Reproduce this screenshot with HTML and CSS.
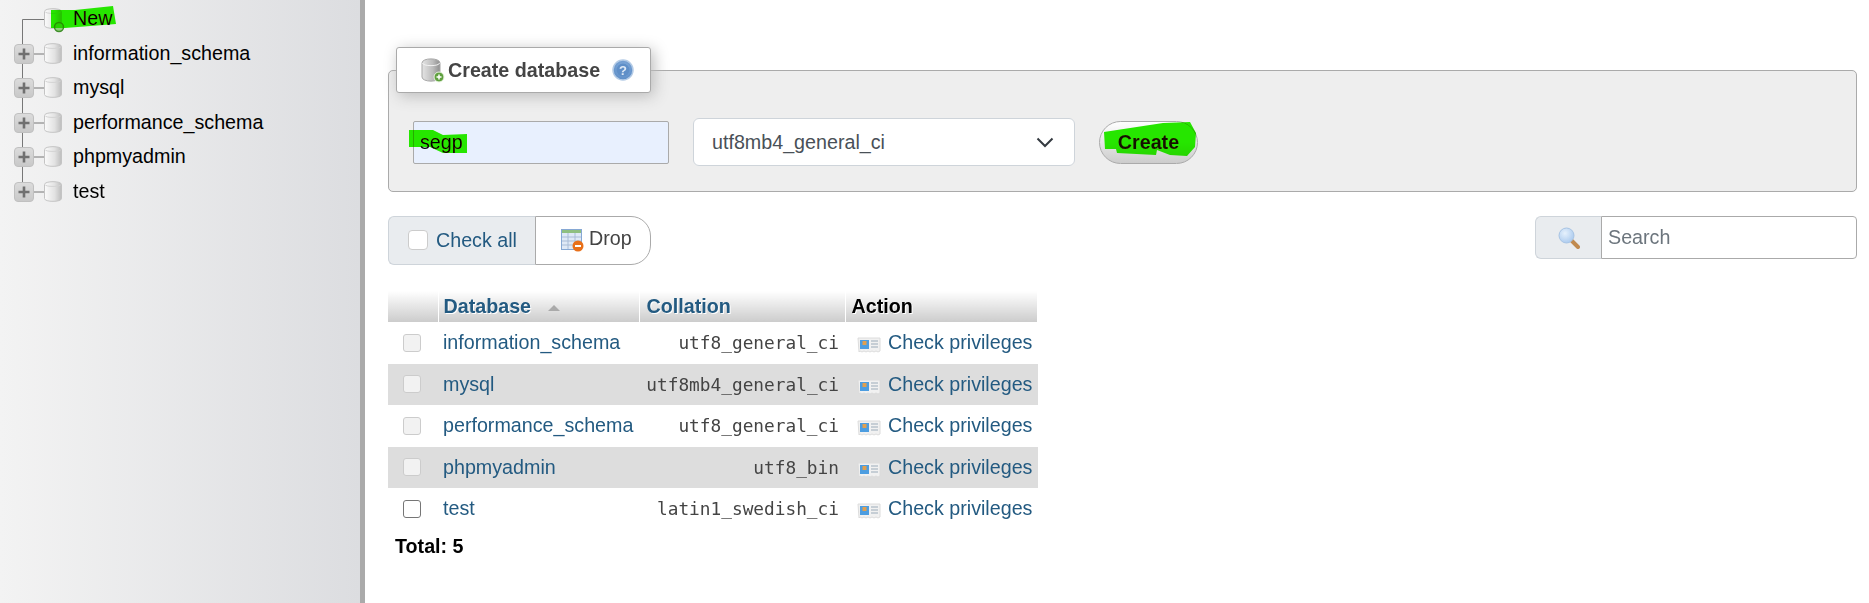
FILE: index.html
```html
<!DOCTYPE html>
<html lang="en">
<head>
    <meta charset="UTF-8">
    <meta name="viewport" content="width=device-width, initial-scale=1.0">
    <title>Databases - phpMyAdmin</title>
    <link rel="stylesheet" href="styles.css">
</head>
<body>
    <!-- Icon sprites -->
    <svg class="sprites" width="0" height="0">
        <defs>
            <linearGradient id="dbGrad" x1="0" y1="0" x2="1" y2="0">
                <stop offset="0" stop-color="#fbfbfb"/>
                <stop offset="0.6" stop-color="#e2e2e2"/>
                <stop offset="1" stop-color="#bdbdbd"/>
            </linearGradient>
            <linearGradient id="dbDark" x1="0" y1="0" x2="1" y2="0">
                <stop offset="0" stop-color="#e4e4e4"/>
                <stop offset="0.6" stop-color="#bcbcbc"/>
                <stop offset="1" stop-color="#8e8e8e"/>
            </linearGradient>
            <linearGradient id="boxGrad" x1="0" y1="0" x2="0" y2="1">
                <stop offset="0" stop-color="#dcdcdc"/>
                <stop offset="1" stop-color="#c8c8c8"/>
            </linearGradient>
            <radialGradient id="helpGrad" cx="0.5" cy="0.4" r="0.6">
                <stop offset="0" stop-color="#8fb4e0"/>
                <stop offset="1" stop-color="#5b8cc6"/>
            </radialGradient>
            <radialGradient id="lensGrad" cx="0.4" cy="0.35" r="0.7">
                <stop offset="0" stop-color="#e6f1fc"/>
                <stop offset="1" stop-color="#a9c9ee"/>
            </radialGradient>
            <symbol id="db" viewBox="0 0 18 21">
                <path d="M0.500 3.500c0-3.800 17-3.800 17 0v14c0 3.800-17 3.800-17 0z" fill="url(#dbGrad)" stroke="#c4c4c4"/>
                <path d="M1 3.500c0 2.600 16 2.600 16 0" fill="none" stroke="#d4d4d4"/>
            </symbol>
            <symbol id="expander" viewBox="0 0 20 20">
                <rect x="0.500" y="0.500" width="19" height="19" rx="3.500" fill="url(#boxGrad)" stroke="#c0c0c0"/>
                <path d="M10 4.500v11M4.500 10h11" stroke="#707070" stroke-width="2.600"/>
            </symbol>
            <symbol id="card" viewBox="0 0 24 17">
                <path d="M1 2h22v13l-2 1-2-1-2 1-2-1-2 1-2-1-2 1-2-1-2 1-2-1-1 1z" fill="#f1f1f1" stroke="#dcdcdc"/>
                <rect x="3" y="4" width="9" height="9" fill="#4d9de0"/>
                <rect x="5.500" y="5" width="4" height="4" fill="#e0a050"/>
                <path d="M14 5h7M14 8h7M14 11h7" stroke="#b8c2cc" stroke-width="1.300"/>
            </symbol>
        </defs>
    </svg>

    <aside class="sidebar">
        <ul class="tree">
            <li class="tree-row">
                <svg class="tree-lead" width="64" height="35" viewBox="0 0 64 35">
                    <path d="M22.500 18.500V35M22.500 18.500H45" stroke="#777" fill="none"/>
                    <use href="#db" x="44" y="7" width="18" height="21"/>
                    <circle cx="59" cy="26" r="4.500" fill="#8fd07a" stroke="#3f8f2a" stroke-width="1.500"/>
                </svg>
                <a href="#">New</a>
            </li>
            <li class="tree-row">
                <svg class="tree-lead" width="64" height="35" viewBox="0 0 64 35">
                    <path d="M22.500 0V35M34 18H45" stroke="#777" fill="none"/>
                    <use href="#expander" x="14" y="8" width="20" height="20"/>
                    <use href="#db" x="44" y="7" width="18" height="21"/>
                </svg>
                <a href="#">information_schema</a>
            </li>
            <li class="tree-row">
                <svg class="tree-lead" width="64" height="35" viewBox="0 0 64 35">
                    <path d="M22.500 0V35M34 18H45" stroke="#777" fill="none"/>
                    <use href="#expander" x="14" y="8" width="20" height="20"/>
                    <use href="#db" x="44" y="7" width="18" height="21"/>
                </svg>
                <a href="#">mysql</a>
            </li>
            <li class="tree-row">
                <svg class="tree-lead" width="64" height="35" viewBox="0 0 64 35">
                    <path d="M22.500 0V35M34 18H45" stroke="#777" fill="none"/>
                    <use href="#expander" x="14" y="8" width="20" height="20"/>
                    <use href="#db" x="44" y="7" width="18" height="21"/>
                </svg>
                <a href="#">performance_schema</a>
            </li>
            <li class="tree-row">
                <svg class="tree-lead" width="64" height="35" viewBox="0 0 64 35">
                    <path d="M22.500 0V35M34 18H45" stroke="#777" fill="none"/>
                    <use href="#expander" x="14" y="8" width="20" height="20"/>
                    <use href="#db" x="44" y="7" width="18" height="21"/>
                </svg>
                <a href="#">phpmyadmin</a>
            </li>
            <li class="tree-row">
                <svg class="tree-lead" width="64" height="35" viewBox="0 0 64 35">
                    <path d="M22.500 0V18M34 18H45" stroke="#777" fill="none"/>
                    <use href="#expander" x="14" y="8" width="20" height="20"/>
                    <use href="#db" x="44" y="7" width="18" height="21"/>
                </svg>
                <a href="#">test</a>
            </li>
        </ul>
    </aside>

    <main class="content">
        <fieldset class="create-box">
            <legend class="create-title">
                <svg width="24" height="26" viewBox="0 0 24 26">
                    <path d="M1 6c0-5.500 18-5.500 18 0v14c0 5.500-18 5.500-18 0z" fill="url(#dbDark)" stroke="#a8a8a8"/>
                    <path d="M1.500 6c0 3.500 17 3.500 17 0" fill="none" stroke="#f2f2f2"/>
                    <circle cx="18" cy="20" r="5" fill="#5fa03f" stroke="#eaf5e2"/>
                    <path d="M15.500 20h5M18 17.500v5" stroke="#fff" stroke-width="1.500"/>
                </svg>
                <span>Create database</span>
                <svg class="help-icon" width="22" height="22" viewBox="0 0 22 22">
                    <circle cx="11" cy="11" r="10" fill="url(#helpGrad)" stroke="#b4cbe6" stroke-width="1.500"/>
                    <circle cx="11" cy="11" r="6.500" fill="#5f8fc8"/>
                    <text x="11" y="15.500" text-anchor="middle" class="help-mark">?</text>
                </svg>
            </legend>
            <div class="create-form">
                <input class="db-name" type="text" value="segp">
                <div class="collation-select">
                    <span>utf8mb4_general_ci</span>
                    <svg width="18" height="11" viewBox="0 0 18 11">
                        <path d="M1.500 1.500L9 9l7.500-7.500" fill="none" stroke="#343a40" stroke-width="2"/>
                    </svg>
                </div>
                <button class="create-btn">Create</button>
            </div>
        </fieldset>

        <div class="toolbar">
            <div class="bulk-group">
                <label class="check-all"><input class="check" type="checkbox"> Check all</label>
                <a class="drop-btn" href="#">
                    <svg width="23" height="23" viewBox="0 0 23 23">
                        <rect x="0.500" y="0.500" width="20" height="20" fill="#dfe9f6" stroke="#86a8d4"/>
                        <rect x="1" y="1" width="19" height="3" fill="#8fbf80"/>
                        <path d="M1 8h19M1 12h19M1 16h19M7 4v16M14 4v16" stroke="#a9bcd6"/>
                        <circle cx="17" cy="17" r="5.500" fill="#e8701a"/>
                        <path d="M14 17h6" stroke="#fff" stroke-width="2"/>
                    </svg>
                    <span class="drop-label">Drop</span>
                </a>
            </div>
            <div class="search-group">
                <span class="search-addon">
                    <svg width="22" height="22" viewBox="0 0 22 22">
                        <path d="M13 13l7 7" stroke="#c08a50" stroke-width="4" stroke-linecap="round"/>
                        <circle cx="8.500" cy="8.500" r="7.500" fill="url(#lensGrad)" stroke="#a8c4e4"/>
                    </svg>
                </span>
                <input class="search-input" type="text" placeholder="Search">
            </div>
        </div>

        <table class="db-table">
            <thead>
                <tr>
                    <th class="col-check"></th>
                    <th class="col-name"><a href="#">Database</a><span class="sort-arrow"></span></th>
                    <th class="col-coll"><a href="#">Collation</a></th>
                    <th class="col-action">Action</th>
                </tr>
            </thead>
            <tbody>
                <tr>
                    <td><input class="check" type="checkbox" disabled></td>
                    <td><a href="#">information_schema</a></td>
                    <td class="coll">utf8_general_ci</td>
                    <td><a class="priv" href="#"><svg width="24" height="17"><use href="#card"/></svg>Check privileges</a></td>
                </tr>
                <tr>
                    <td><input class="check" type="checkbox" disabled></td>
                    <td><a href="#">mysql</a></td>
                    <td class="coll">utf8mb4_general_ci</td>
                    <td><a class="priv" href="#"><svg width="24" height="17"><use href="#card"/></svg>Check privileges</a></td>
                </tr>
                <tr>
                    <td><input class="check" type="checkbox" disabled></td>
                    <td><a href="#">performance_schema</a></td>
                    <td class="coll">utf8_general_ci</td>
                    <td><a class="priv" href="#"><svg width="24" height="17"><use href="#card"/></svg>Check privileges</a></td>
                </tr>
                <tr>
                    <td><input class="check" type="checkbox" disabled></td>
                    <td><a href="#">phpmyadmin</a></td>
                    <td class="coll">utf8_bin</td>
                    <td><a class="priv" href="#"><svg width="24" height="17"><use href="#card"/></svg>Check privileges</a></td>
                </tr>
                <tr>
                    <td><input class="check" type="checkbox"></td>
                    <td><a href="#">test</a></td>
                    <td class="coll">latin1_swedish_ci</td>
                    <td><a class="priv" href="#"><svg width="24" height="17"><use href="#card"/></svg>Check privileges</a></td>
                </tr>
            </tbody>
        </table>
        <p class="total">Total: 5</p>
    </main>

    <!-- Green marker strokes drawn over the screenshot -->
    <svg class="marker" viewBox="0 0 1869 603">
        <path d="M51 10L75 10 113 6 116 24 65 28 51 28z"/>
        <path d="M409 130L433 130 443 135 467 134 467 153 443 153 430 147 409 147z"/>
        <path d="M1104 132L1117 130 1163 123 1190 122 1196 133 1195 147 1187 156 1170 155 1157 150 1156 155 1117 153 1116 149 1105 149z"/>
    </svg>
</body>
</html>
```

FILE: styles.css
```css
* {
    box-sizing: border-box;
}

body {
    font-family: "Liberation Sans", Arial, sans-serif;
    font-size: 19.700px;
    color: #444;
    margin: 0;
    min-height: 100vh;
    display: flex;
    overflow: hidden;
}

a {
    color: #235a81;
    text-decoration: none;
}

.sprites {
    display: block;
    width: 0;
    height: 0;
}

/* Navigation */
.sidebar {
    flex: 0 0 365px;
    padding-top: 1.500px;
    background: linear-gradient(to right, #f3f3f3, #dcdde0);
    border-right: 5px solid #aaa;
}

.tree {
    list-style: none;
    margin: 0;
    padding: 0;
}

.tree-row {
    height: 34.500px;
    display: flex;
    align-items: center;
    gap: 9px;
}

.tree-row a {
    color: #000;
}

.tree-lead {
    flex: none;
    overflow: visible;
}

/* Main area */
.content {
    flex: 1;
    padding: 0 12px 0 23px;
}

.create-box {
    margin: 47px 0 0;
    padding: 0 24px 25px;
    background: #eee;
    border: 1px solid #aaa;
    border-radius: 5px;
    min-width: 0;
}

.create-title {
    margin-left: -17px;
    width: 255px;
    height: 46px;
    padding: 0 0 0 24px;
    display: flex;
    align-items: center;
    background: #fff;
    border: 1px solid #aaa;
    border-radius: 3px;
    box-shadow: 3px 3px 15px #bbb;
    font-weight: bold;
    color: #444;
}

.create-title span {
    margin-left: 3px;
}

.help-icon {
    margin-left: 12px;
}

.help-mark {
    font-size: 13px;
    font-weight: bold;
    fill: #dfe9f5;
}

.create-form {
    margin-top: 25px;
    display: flex;
    align-items: center;
}

.db-name {
    width: 256px;
    height: 43px;
    padding: 0 6px;
    background: #e8f0fe;
    border: 1px solid #aaa;
    border-radius: 2px;
    font: inherit;
    color: #000;
}

.collation-select {
    width: 382px;
    height: 48px;
    margin-left: 24px;
    padding: 0 20px 0 18px;
    display: flex;
    align-items: center;
    justify-content: space-between;
    background: #fff;
    border: 1px solid #ced4da;
    border-radius: 6px;
    color: #495057;
}

.create-btn {
    width: 99px;
    height: 43px;
    margin-left: 24px;
    padding: 0;
    background: linear-gradient(#fff, #ccc);
    border: 1px solid #aaa;
    border-radius: 22px;
    font: inherit;
    font-weight: bold;
    color: #111;
}

.toolbar {
    margin-top: 24px;
    display: flex;
    justify-content: space-between;
    align-items: flex-start;
}

.bulk-group {
    display: flex;
    height: 49px;
}

.check-all {
    width: 147px;
    padding: 0 0 1px 19px;
    display: flex;
    align-items: center;
    gap: 8px;
    background: #e9ecef;
    border: 1px solid #ced4da;
    border-right: 0;
    border-radius: 6px 0 0 6px;
    color: #235a81;
}

.check-all .check {
    width: 20px;
    height: 20px;
}

.drop-btn {
    width: 116px;
    padding-left: 25px;
    display: flex;
    align-items: center;
    gap: 5px;
    background: #fff;
    border: 1px solid #aaa;
    border-radius: 0 20px 20px 0;
    color: #444;
}

.drop-label {
    margin-bottom: 4px;
}

.check {
    appearance: none;
    flex: none;
    display: block;
    width: 18px;
    height: 18px;
    margin: 0;
    background: #fff;
    border: 1px solid #767676;
    border-radius: 3px;
}

.check-all .check {
    border-color: #ccc;
    border-radius: 4px;
}

.check:disabled {
    background: #f2f2f2;
    border-color: #ccc;
}

.search-group {
    display: flex;
    width: 322px;
    height: 43px;
}

.search-addon {
    width: 66px;
    display: flex;
    align-items: center;
    justify-content: center;
    background: #e9ecef;
    border: 1px solid #ced4da;
    border-right: 0;
    border-radius: 6px 0 0 6px;
}

.search-input {
    flex: 1;
    min-width: 0;
    padding: 0 6px 1px;
    border: 1px solid #aaa;
    border-radius: 0 4px 4px 0;
    font: inherit;
    color: #444;
}

.search-input::placeholder {
    color: #6c757d;
}

/* Database list */
.db-table {
    margin-top: 26px;
    width: 650px;
    table-layout: fixed;
    border-collapse: collapse;
}

.db-table th {
    height: 31px;
    padding: 0 6px;
    text-align: left;
    font-weight: bold;
    color: #000;
    text-shadow: 1px 1px 0 #fff;
    background: linear-gradient(#fff, #ccc);
    border-right: 1px solid #fff;
}

.col-check {
    width: 50px;
}

.col-name {
    width: 201px;
}

.col-name a {
    margin-left: -1px;
}

.col-coll {
    width: 206px;
    padding-left: 7px !important;
}

.db-table td {
    height: 41.500px;
    padding: 0 6px 0 5px;
}

.db-table td:first-child {
    padding-left: 15px;
}

.db-table td:last-child {
    padding-left: 12px;
    padding-right: 0;
}

.db-table tbody tr:nth-child(even) {
    background: #ddd;
}

.coll {
    text-align: right;
    font-family: "DejaVu Sans Mono", "Liberation Mono", monospace;
    font-size: 17.800px;
}

.priv {
    display: flex;
    align-items: center;
    gap: 7px;
}

.priv svg {
    flex: none;
    margin-top: 4px;
}

.sort-arrow {
    display: inline-block;
    margin-left: 17px;
    vertical-align: 2px;
    border-left: 6px solid transparent;
    border-right: 6px solid transparent;
    border-bottom: 6px solid #aaa;
}

.total {
    margin: 5px 0 0 7px;
    font-weight: bold;
    color: #000;
}

/* Marker strokes */
.marker {
    position: absolute;
    left: 0;
    top: 0;
    width: 1869px;
    height: 603px;
    mix-blend-mode: darken;
    pointer-events: none;
}

.marker path {
    fill: #26e600;
}
```
